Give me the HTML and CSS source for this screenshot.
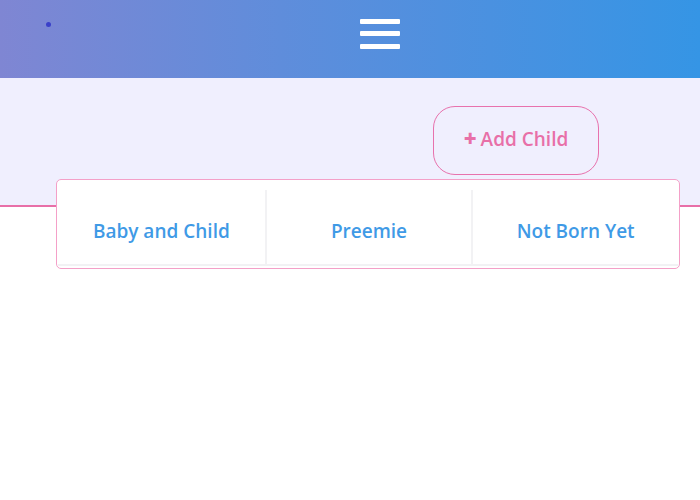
FILE: index.html
```html
<!DOCTYPE html>
<html>
<head>
<meta charset="utf-8">
<link rel="stylesheet" href="styles.css">
</head>
<body>
<header class="topbar">
  <span class="dot"></span>
  <button class="burger" aria-label="menu">
    <span class="bar"></span>
    <span class="bar"></span>
    <span class="bar"></span>
  </button>
</header>
<section class="band">
  <button class="add-btn"><span class="plus">+</span> Add Child</button>
</section>
<div class="card">
  <div class="tabs">
    <div class="tab">Baby and Child</div>
    <div class="tab">Preemie</div>
    <div class="tab">Not Born Yet</div>
  </div>
</div>
</body>
</html>
```
FILE: styles.css
```css
html, body {
  margin: 0;
  padding: 0;
  background: #ffffff;
  font-family: "Open Sans", "Noto Sans", sans-serif;
}
.topbar {
  height: 78px;
  background: linear-gradient(90deg, #7f86d3 0%, #5f8ddb 40%, #3595e5 100%);
  display: flex;
  align-items: flex-start;
}
.dot {
  width: 5px;
  height: 5px;
  border-radius: 50%;
  background: #3a40c9;
  margin: 22px 0 0 46px;
}
.burger {
  margin: 19px 0 0 309px;
  padding: 0;
  border: 0;
  background: transparent;
  display: flex;
  flex-direction: column;
  gap: 7px;
}
.bar {
  display: block;
  width: 40px;
  height: 5px;
  border-radius: 1px;
  background: #ffffff;
}
.bar:last-child {
  margin-top: 1px;
}
.band {
  height: 99px;
  padding-top: 28px;
  background: #f0effe;
  border-bottom: 2px solid #e86fa8;
  display: flex;
  justify-content: flex-end;
  align-items: flex-start;
  padding-right: 101px;
}
.add-btn {
  width: 166px;
  height: 69px;
  border: 1px solid #e872ad;
  border-radius: 22px;
  background: transparent;
  color: #e86fa8;
  font-family: "Open Sans", "Noto Sans", sans-serif;
  font-size: 19px;
  font-weight: 600;
  padding: 0 0 4px 0;
  display: flex;
  align-items: center;
  justify-content: center;
  gap: 4px;
}
.plus {
  font-weight: 800;
  font-size: 22px;
  line-height: 1;
  margin-top: -2px;
}
.card {
  position: relative;
  margin: -28px 20px 0 56px;
  border: 1px solid #f4a0c8;
  border-radius: 5px;
  background: #ffffff;
  padding: 10px 1px 2px 1px;
}
.tabs {
  display: grid;
  grid-template-columns: 1fr 1fr 1fr;
  border-bottom: 2px solid #f2f2f4;
}
.tab {
  height: 74px;
  display: flex;
  align-items: center;
  justify-content: center;
  padding-top: 8px;
  box-sizing: border-box;
  color: #3f9ae6;
  font-size: 19px;
  font-weight: 600;
}
.tab + .tab {
  border-left: 2px solid #f2f2f4;
}
```
